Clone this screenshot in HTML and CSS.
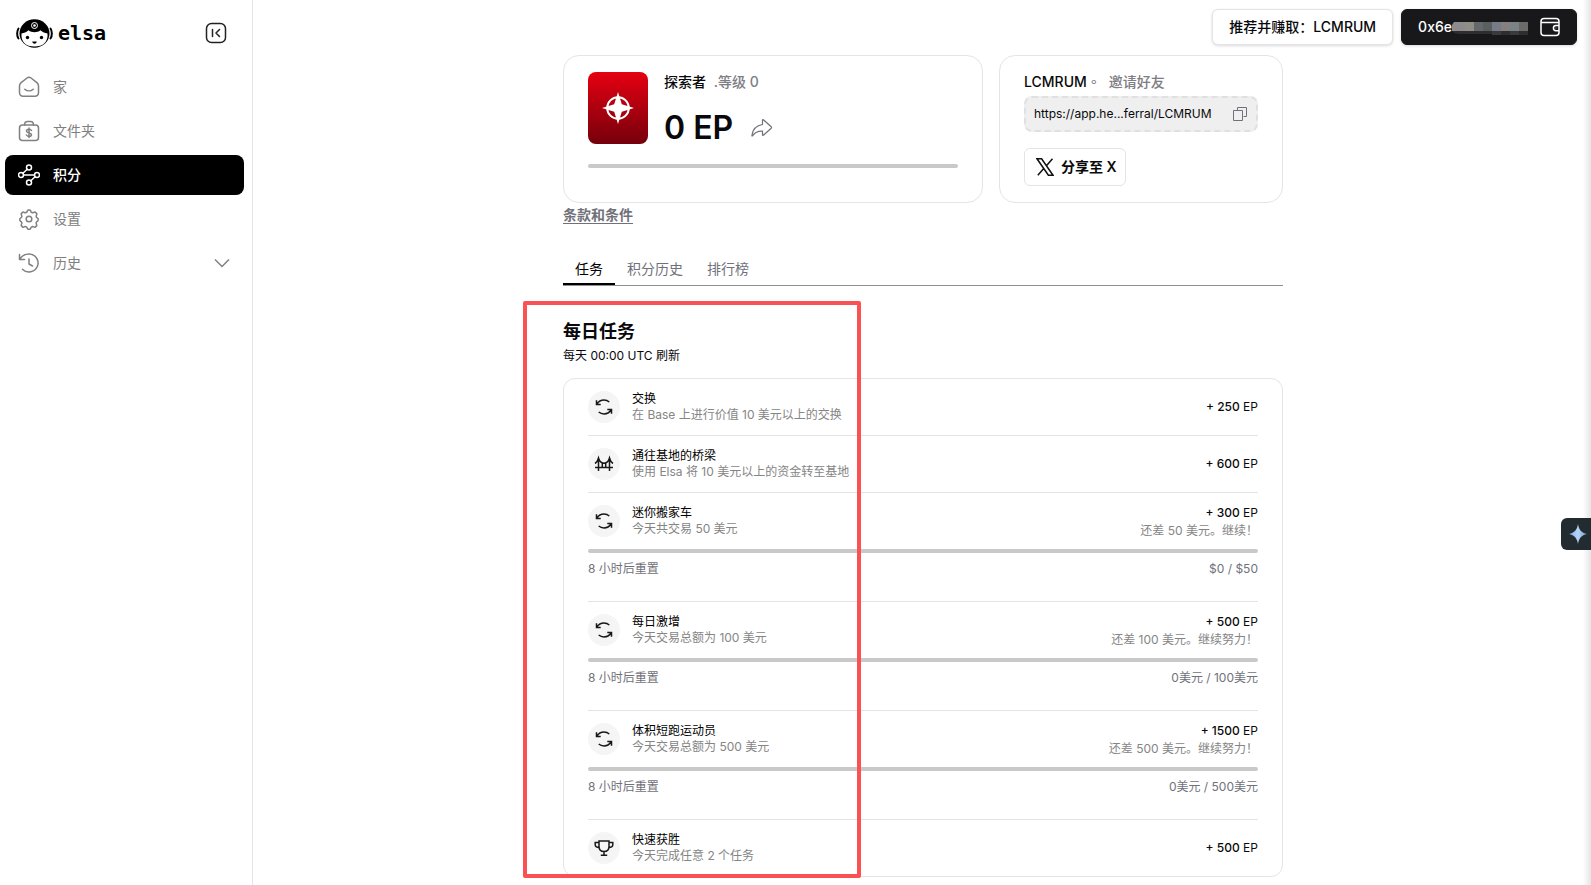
FILE: index.html
```html
<!DOCTYPE html>
<html lang="zh-CN">
<head>
<meta charset="utf-8">
<meta name="viewport" content="width=device-width, initial-scale=1">
<title>Elsa 积分</title>
<link rel="stylesheet" href="styles.css">
</head>
<body>
<svg class="sprite" aria-hidden="true">
  <symbol id="swap" viewBox="0 0 20 20"><path d="M2.500 3.200v4.200h4.200M2.900 7C4.600 4.400 7.100 3.100 10 3.100c2.100 0 3.900.7 5.300 1.900M17.500 16.800v-4.200h-4.200M17.100 13c-1.700 2.600-4.200 3.900-7.100 3.900-2.100 0-3.900-.7-5.300-1.900"/></symbol>
</svg>
<div class="app">
  <aside class="sidebar">
    <div class="brand-row">
      <a class="brand" href="#" aria-label="elsa">
        <svg class="brand-face" viewBox="0 0 37 29" aria-hidden="true">
          <path class="ear" d="M2.500 9.500C.7 12 .7 17 2.500 19.500M34.500 9.500c1.800 2.500 1.800 7.500 0 10"/>
          <ellipse cx="18.500" cy="14.500" rx="15" ry="14.200"/>
          <path class="skin" d="M5.500 14.500c2.500-.3 5-1.200 7-3.200 1.800 1.400 3.800 1.900 6 1.900s4.200-.5 6-1.900c2 2 4.500 2.900 7 3.200.8 8.500-4.500 13-13 13s-13.800-4.500-13-13z"/>
          <circle class="ring" cx="18.500" cy="6.500" r="3"/><circle class="skin" cx="18.500" cy="6.500" r="1.300"/>
          <circle cx="11.500" cy="18.500" r="1.700"/><circle cx="25.500" cy="18.500" r="1.700"/>
          <path d="M16.300 22.500h4.400c0 1.400-1 2.200-2.200 2.200s-2.200-.8-2.200-2.200z"/>
        </svg>
        <span class="brand-name">elsa</span>
      </a>
      <button class="icon-button" type="button" aria-label="收起侧栏">
        <svg class="icon collapse" viewBox="0 0 22 22" aria-hidden="true"><rect x="1.500" y="1.500" width="19" height="19" rx="5"/><path d="M7.500 7.500v7M14.500 7.500L11 11l3.500 3.500"/></svg>
      </button>
    </div>
    <nav class="nav">
      <a class="nav-item" href="#">
        <svg class="icon" viewBox="0 0 22 22" aria-hidden="true"><path d="M1.500 10c0-1.500.5-2.400 1.600-3.300L9 2c1.300-1 2.700-1 4 0l5.900 4.700c1.100.9 1.600 1.800 1.600 3.300v6.500c0 2.400-1.300 3.700-3.700 3.700H5.200c-2.400 0-3.700-1.300-3.700-3.700zM6.800 13.200c2.400 2.200 6 2.200 8.400 0"/></svg>
        家</a>
      <a class="nav-item" href="#">
        <svg class="icon" viewBox="0 0 22 22" aria-hidden="true"><rect x="1.500" y="5" width="19" height="15.500" rx="3"/><path d="M6.500 5c0-2.400 1-3.500 3-3.500h3c2 0 3 1.100 3 3.500M13.500 10.500c-.5-.9-1.400-1.300-2.500-1.300-1.400 0-2.500.6-2.500 1.800 0 2.600 5 1.200 5 3.700 0 1.100-1.100 1.700-2.500 1.700-1.200 0-2.100-.5-2.600-1.400M11 8v9.500"/></svg>
        文件夹</a>
      <a class="nav-item active" href="#" aria-current="page">
        <svg class="icon" viewBox="0 0 22 22" aria-hidden="true"><circle cx="11" cy="3.500" r="2.500"/><circle cx="3" cy="11" r="2.500"/><circle cx="19" cy="11" r="2.500"/><circle cx="11" cy="18.500" r="2.500"/><path d="M9.200 5.300L4.900 9.300M5.500 11h11M17.100 12.800l-4.300 4"/></svg>
        积分</a>
      <a class="nav-item" href="#">
        <svg class="icon" viewBox="0 0 22 22" aria-hidden="true"><circle cx="11" cy="11" r="2.800"/><path d="M8.800 4.200l.7-1.600c.2-.4.500-.6 1-.6h1c.5 0 .8.200 1 .6l.7 1.600 1.500.6 1.700-.6c.4-.2.8-.1 1.100.2l1 1c.3.300.4.700.2 1.100l-.6 1.700.5 1.300 1 .7c.3.200.6.500.6.900v1c0 .5-.2.800-.6 1l-1 .7-.5 1.300.6 1.700c.2.400.1.800-.2 1.100l-1 1c-.3.300-.7.400-1.100.2l-1.700-.6-1.500.6-.7 1.600c-.2.400-.5.600-1 .6h-1c-.5 0-.8-.2-1-.6l-.7-1.600-1.500-.6-1.700.6c-.4.200-.8.100-1.100-.2l-1-1c-.3-.3-.4-.7-.2-1.100l.6-1.700-.5-1.300-1-.7c-.4-.2-.6-.5-.6-1v-1c0-.4.200-.7.600-.9l1-.7.500-1.300-.6-1.700c-.2-.4-.1-.8.200-1.100l1-1c.3-.3.700-.4 1.100-.2l1.700.6z"/></svg>
        设置</a>
      <a class="nav-item" href="#">
        <svg class="icon" viewBox="0 0 22 22" aria-hidden="true"><path d="M1.500 2.500v5h5M1.800 7.300C3.500 4 6.800 2 11 2a9 9 0 1 1-6.500 15.200M11 7v5l3.500 2"/></svg>
        历史
        <svg class="chevron" viewBox="0 0 16 10" aria-hidden="true"><path d="M1 1.500l7 7 7-7"/></svg></a>
    </nav>
  </aside>

  <main class="main">
    <header class="topbar">
      <button class="top-button" type="button"><span>推荐并赚取<span class="mid">：</span>LCMRUM</span></button>
      <button class="top-button dark" type="button">
        <span class="address">0x6e<svg class="mosaic" viewBox="0 0 76 20" aria-hidden="true"><path fill="#2e2e31" d="M0 14h76v4H46v-1H8c-4 0-6-1-8-3z"/><path fill="#3a3a3d" d="M40 14h9v4h-9zM58 14h9v4h-9z"/><path fill="#8d8b8e" d="M2 5h11v9H0V8z"/><path fill="#8f8f86" d="M13 5h9v9h-9z"/><path fill="#66696c" d="M22 5h9v9h-9z"/><path fill="#59605f" d="M31 5h9v9h-9z"/><path fill="#777b87" d="M40 5h9v9h-9z"/><path fill="#857f80" d="M49 5h9v9h-9z"/><path fill="#7b8286" d="M58 5h9v9h-9z"/><path fill="#6d6b69" d="M67 5h9v9h-9z"/></svg></span>
        <svg class="wallet" viewBox="0 0 20 20" aria-hidden="true"><path d="M19 8V4.500C19 2.500 18 1.500 16 1.500H4c-2 0-3 1-3 3v11c0 2 1 3 3 3h12c2 0 3-1 3-3V14M1 5.500h18M19 8.500h-3a2.600 2.600 0 0 0 0 5.200h3zM15.800 11.100h.4"/></svg>
      </button>
    </header>

    <div class="content">
      <div class="cards">
        <section class="card level-card">
          <div class="level">
            <div class="badge"><svg class="compass" viewBox="0 0 32 32" aria-hidden="true"><circle cx="16" cy="16" r="10.800"/><path d="M16 0l3.800 12.200L32 16l-12.200 3.800L16 32l-3.800-12.200L0 16l12.200-3.800z"/></svg></div>
            <div class="level-text">
              <p class="level-name">探索者 <span class="muted">.等级 0</span></p>
              <p class="points">0 EP
                <button class="icon-button" type="button" aria-label="分享"><svg class="share" viewBox="0 0 22 18" aria-hidden="true"><path d="M11.500 1.200c0-.6.500-.8.900-.4l7.800 7c.5.500.5.900 0 1.400l-7.800 7c-.4.400-.9.200-.9-.4v-3.600C7 12 4 13.300 1.500 16.800.8 17.300.9 16.500 1 16c.8-6 4.500-9.500 10.500-10.500z"/></svg></button>
              </p>
            </div>
          </div>
          <div class="bar"></div>
        </section>
        <section class="card invite-card">
          <p class="invite-title"><span>LCMRUM<span class="mid muted">。</span></span><span class="muted">邀请好友</span></p>
          <div class="link-box"><span>https://app.he...ferral/LCMRUM</span>
            <button class="icon-button" type="button" aria-label="复制链接"><svg class="copy" viewBox="0 0 14 14" aria-hidden="true"><path d="M4.500 3.500v-3h9v9h-3M.5 3.500h9v10h-9z"/></svg></button>
          </div>
          <button class="share-x" type="button">
            <svg class="x-logo" viewBox="0 0 18 18" aria-hidden="true"><path d="M1 .8h4.600L17 17.200h-4.600zM16.500.8L10 8.200M8 10.300l-6.200 6.900"/></svg>
            分享至 X</button>
        </section>
      </div>
      <a class="terms" href="#">条款和条件</a>

      <div class="tabs" role="tablist">
        <button class="tab selected" type="button" role="tab" aria-selected="true">任务</button>
        <button class="tab" type="button" role="tab" aria-selected="false">积分历史</button>
        <button class="tab" type="button" role="tab" aria-selected="false">排行榜</button>
      </div>

      <section class="tasks">
        <h2>每日任务</h2>
        <p class="refresh">每天 00:00 UTC 刷新</p>
        <ul class="task-list">
          <li class="task">
            <div class="task-main">
              <span class="task-icon"><svg viewBox="0 0 20 20" aria-hidden="true"><use href="#swap"/></svg></span>
              <div class="task-text"><h3>交换</h3><p>在 Base 上进行价值 10 美元以上的交换</p></div>
              <div class="reward"><p><b>+ 250</b> EP</p></div>
            </div>
          </li>
          <li class="task">
            <div class="task-main">
              <span class="task-icon"><svg viewBox="0 0 20 20" aria-hidden="true"><path d="M4.500 17V4M15.500 17V4M1 13.500h18M1 9.500c1.700-1 2.800-2.800 3.500-5.500 1 3.500 3 5.200 5.500 5.200s4.500-1.700 5.500-5.200c.7 2.700 1.800 4.500 3.500 5.500M8.300 9v4.500M11.700 9v4.500"/></svg></span>
              <div class="task-text"><h3>通往基地的桥梁</h3><p>使用 Elsa 将 10 美元以上的资金转至基地</p></div>
              <div class="reward"><p><b>+ 600</b> EP</p></div>
            </div>
          </li>
          <li class="task">
            <div class="task-main tall">
              <span class="task-icon"><svg viewBox="0 0 20 20" aria-hidden="true"><use href="#swap"/></svg></span>
              <div class="task-text"><h3>迷你搬家车</h3><p>今天共交易 50 美元</p></div>
              <div class="reward"><p><b>+ 300</b> EP</p><p class="hint">还差 50 美元。继续<span class="mid">！</span></p></div>
            </div>
            <div class="bar"></div>
            <div class="progress-text"><span>8 小时后重置</span><span>$0 / $50</span></div>
          </li>
          <li class="task">
            <div class="task-main tall">
              <span class="task-icon"><svg viewBox="0 0 20 20" aria-hidden="true"><use href="#swap"/></svg></span>
              <div class="task-text"><h3>每日激增</h3><p>今天交易总额为 100 美元</p></div>
              <div class="reward"><p><b>+ 500</b> EP</p><p class="hint">还差 100 美元。继续努力<span class="mid">！</span></p></div>
            </div>
            <div class="bar"></div>
            <div class="progress-text"><span>8 小时后重置</span><span>0美元 / 100美元</span></div>
          </li>
          <li class="task">
            <div class="task-main tall">
              <span class="task-icon"><svg viewBox="0 0 20 20" aria-hidden="true"><use href="#swap"/></svg></span>
              <div class="task-text"><h3>体积短跑运动员</h3><p>今天交易总额为 500 美元</p></div>
              <div class="reward"><p><b>+ 1500</b> EP</p><p class="hint">还差 500 美元。继续努力<span class="mid">！</span></p></div>
            </div>
            <div class="bar"></div>
            <div class="progress-text"><span>8 小时后重置</span><span>0美元 / 500美元</span></div>
          </li>
          <li class="task">
            <div class="task-main">
              <span class="task-icon"><svg viewBox="0 0 20 20" aria-hidden="true"><path d="M5 3h10v5.500c0 3-2 5-5 5s-5-2-5-5zM5 4.500H1.200v2C1.200 8.500 3 9.500 5.200 9.500M15 4.500h3.800v2c0 2-1.800 3-4 3M10 13.500V17M6.800 17.300h6.400"/></svg></span>
              <div class="task-text"><h3>快速获胜</h3><p>今天完成任意 2 个任务</p></div>
              <div class="reward"><p><b>+ 500</b> EP</p></div>
            </div>
          </li>
        </ul>
        <div class="highlight"></div>
      </section>
    </div>
  </main>
  <div class="edge-shade"></div>
  <button class="assistant" type="button" aria-label="助手">
    <svg viewBox="0 0 18 20" aria-hidden="true"><defs><linearGradient id="spark" x1="0" x2="1"><stop offset="0" stop-color="#7fb2f0"/><stop offset=".5" stop-color="#b5d3f5"/><stop offset="1" stop-color="#6f9fc4"/></linearGradient></defs><path fill="url(#spark)" d="M9 0c.8 5.500 3.500 9 9 10-5.500 1-8.200 4.500-9 10-.8-5.500-3.500-9-9-10 5.500-1 8.200-4.500 9-10z"/></svg>
  </button>
</div>
</body>
</html>
```

FILE: styles.css
```css
* { box-sizing: border-box; }
body, h2, h3, p, ul { margin: 0; padding: 0; }
body {
  background: #fff;
  color: #09090b;
  font: 14px/20px Inter, "Noto Sans CJK SC", sans-serif;
}
button { font: inherit; color: inherit; cursor: pointer; }
a { color: inherit; text-decoration: none; }
svg { display: block; flex: none; }
.sprite { position: absolute; width: 0; height: 0; }
.muted { color: #7d7d82; }
.mid { font-family: "Noto Sans CJK TC", sans-serif; line-height: 1; }

.app { display: flex; min-height: 100vh; }

/* Sidebar */
.sidebar {
  width: 253px;
  flex: none;
  border-right: 1px solid #e4e4e7;
  padding: 16px 8px 16px 5px;
}
.brand-row {
  display: flex;
  align-items: center;
  justify-content: space-between;
  height: 34px;
  padding: 0 17px 0 11px;
}
.brand { display: flex; align-items: center; gap: 5px; }
.brand-face { width: 37px; height: 29px; }
.brand-face .ear { fill: none; stroke: #000; stroke-width: 2; stroke-linecap: round; }
.brand-face .skin { fill: #fff; }
.brand-face .ring { fill: none; stroke: #fff; }
.brand-name { font: bold 20px/28px "DejaVu Sans Mono", monospace; color: #000; }
.icon-button { display: block; padding: 0; border: 0; background: none; }
.nav { display: flex; flex-direction: column; gap: 4px; margin-top: 17px; }
.nav-item {
  display: flex;
  align-items: center;
  gap: 13px;
  height: 40px;
  padding: 0 14px 0 13px;
  border-radius: 8px;
  color: #808080;
}
.nav-item.active { background: #000; color: #fff; font-weight: 500; }
.icon { width: 22px; height: 22px; fill: none; stroke: currentColor; stroke-width: 1.5; stroke-linecap: round; stroke-linejoin: round; }
.collapse { color: #222; }
.chevron { width: 16px; height: 10px; margin-left: auto; fill: none; stroke: currentColor; stroke-width: 1.5; }

/* Header */
.main { flex: 1; min-width: 0; padding-left: 2px; }
.topbar { display: flex; justify-content: flex-end; gap: 8px; padding: 9px 14px 10px; }
.top-button {
  display: flex;
  align-items: center;
  gap: 12px;
  height: 36px;
  padding: 0 16px;
  border: 1px solid #e4e4e7;
  border-radius: 6px;
  background: #fff;
  font-weight: 500;
  box-shadow: 0 1px 3px rgba(0, 0, 0, .15);
}
.top-button.dark { background: #18181b; border-color: #18181b; color: #fff; }
.address { display: flex; align-items: center; }
.mosaic { width: 76px; height: 20px; }
.wallet { width: 20px; height: 20px; fill: none; stroke: #fff; stroke-width: 1.5; }

/* Summary cards */
.content { width: min(720px, 100% - 32px); margin: 0 auto; }
.cards { display: grid; grid-template-columns: 420fr 284fr; gap: 16px; }
.card { border: 1px solid #e4e4e7; border-radius: 16px; padding: 16px 24px; }
.level { display: flex; gap: 16px; }
.badge {
  display: grid;
  place-items: center;
  width: 60px;
  height: 72px;
  border-radius: 8px;
  background: linear-gradient(#e60012, #75000b);
}
.compass { width: 32px; height: 32px; fill: #fff; }
.compass circle { fill: none; stroke: #fff; stroke-width: 2; }
.level-name { font-weight: 500; }
.level-name .muted { margin-left: 4px; }
.points { display: flex; align-items: center; gap: 18px; margin-top: 20px; font-size: 32px; line-height: 32px; font-weight: 600; }
.share { width: 22px; height: 18px; fill: none; stroke: #71717a; stroke-width: 1.2; }
.bar { height: 4px; border-radius: 2px; background: #c9c9c9; }
.level-card .bar { margin-top: 20px; }
.invite-card { display: flex; flex-direction: column; align-items: flex-start; }
.invite-title { display: flex; gap: 8px; height: 20px; font-weight: 500; }
.link-box {
  display: flex;
  align-items: center;
  justify-content: space-between;
  align-self: stretch;
  height: 36px;
  margin: 4px 0 16px;
  padding: 0 9px 0 8px;
  border: 2px dashed #e0e0e0;
  border-radius: 8px;
  background: #efefef;
  font-size: 12px;
}
.copy { width: 14px; height: 14px; fill: none; stroke: #71717a; }
.share-x {
  display: flex;
  align-items: center;
  gap: 7px;
  height: 38px;
  padding: 0 8px 0 11px;
  border: 1px solid #e4e4e7;
  border-radius: 6px;
  background: #fff;
  font-weight: 600;
}
.x-logo { width: 18px; height: 18px; fill: none; stroke: #111; stroke-width: 1.5; }
.terms { display: table; margin-top: 2px; color: #71717a; font-weight: 600; text-decoration: underline; text-underline-offset: 3px; }

/* Tabs */
.tabs { display: flex; margin-top: 28px; border-bottom: 1px solid #8f8f8f; }
.tab { height: 32px; padding: 2px 12px 0; border: 0; border-bottom: 2px solid transparent; background: none; color: #71717a; }
.tab.selected { border-color: #000; color: #000; }

/* Tasks */
.tasks { position: relative; padding-top: 34px; }
h2 { font-size: 18px; line-height: 24px; font-weight: 700; }
.refresh { margin: 4px 0 14px; font-size: 12px; line-height: 16px; }
.task-list { list-style: none; border: 1px solid #e4e4e7; border-radius: 12px; padding: 0 24px; }
.task { padding: 12px 0; font-size: 12px; line-height: 16px; }
.task + .task { border-top: 1px solid #e4e4e7; }
.task-main { display: flex; align-items: center; gap: 12px; }
.task-main.tall { align-items: flex-start; margin-bottom: 10px; }
.task-icon { display: grid; place-items: center; flex: none; width: 32px; height: 32px; border-radius: 50%; background: #f5f5f5; }
.task-icon svg { width: 20px; height: 20px; fill: none; stroke: #18181b; stroke-width: 1.5; }
.task-text h3 { font-size: 12px; line-height: 16px; font-weight: 400; color: #000; }
.task-text p, .hint { color: #858585; }
.reward { margin-left: auto; text-align: right; }
.reward b { font-weight: 500; }
.hint { margin-top: 2px; }
.progress-text { display: flex; justify-content: space-between; padding: 8px 0 12px; color: #71717a; }
.highlight { position: absolute; inset: 15px auto -1px -40px; width: 338px; border: 4px solid #fa5252; border-radius: 2px; pointer-events: none; }

/* Window edge */
.edge-shade { position: fixed; inset: 0 0 0 auto; width: 8px; background: linear-gradient(90deg, transparent, rgba(0, 0, 0, .1)); pointer-events: none; }
.assistant {
  position: fixed;
  right: 0;
  top: calc(50vh + 75px);
  display: grid;
  place-items: center;
  width: 30px;
  height: 32px;
  padding: 0 0 0 4px;
  border: 0;
  border-radius: 6px 0 0 6px;
  background: #222b2f;
}
.assistant svg { width: 18px; height: 20px; }
```
